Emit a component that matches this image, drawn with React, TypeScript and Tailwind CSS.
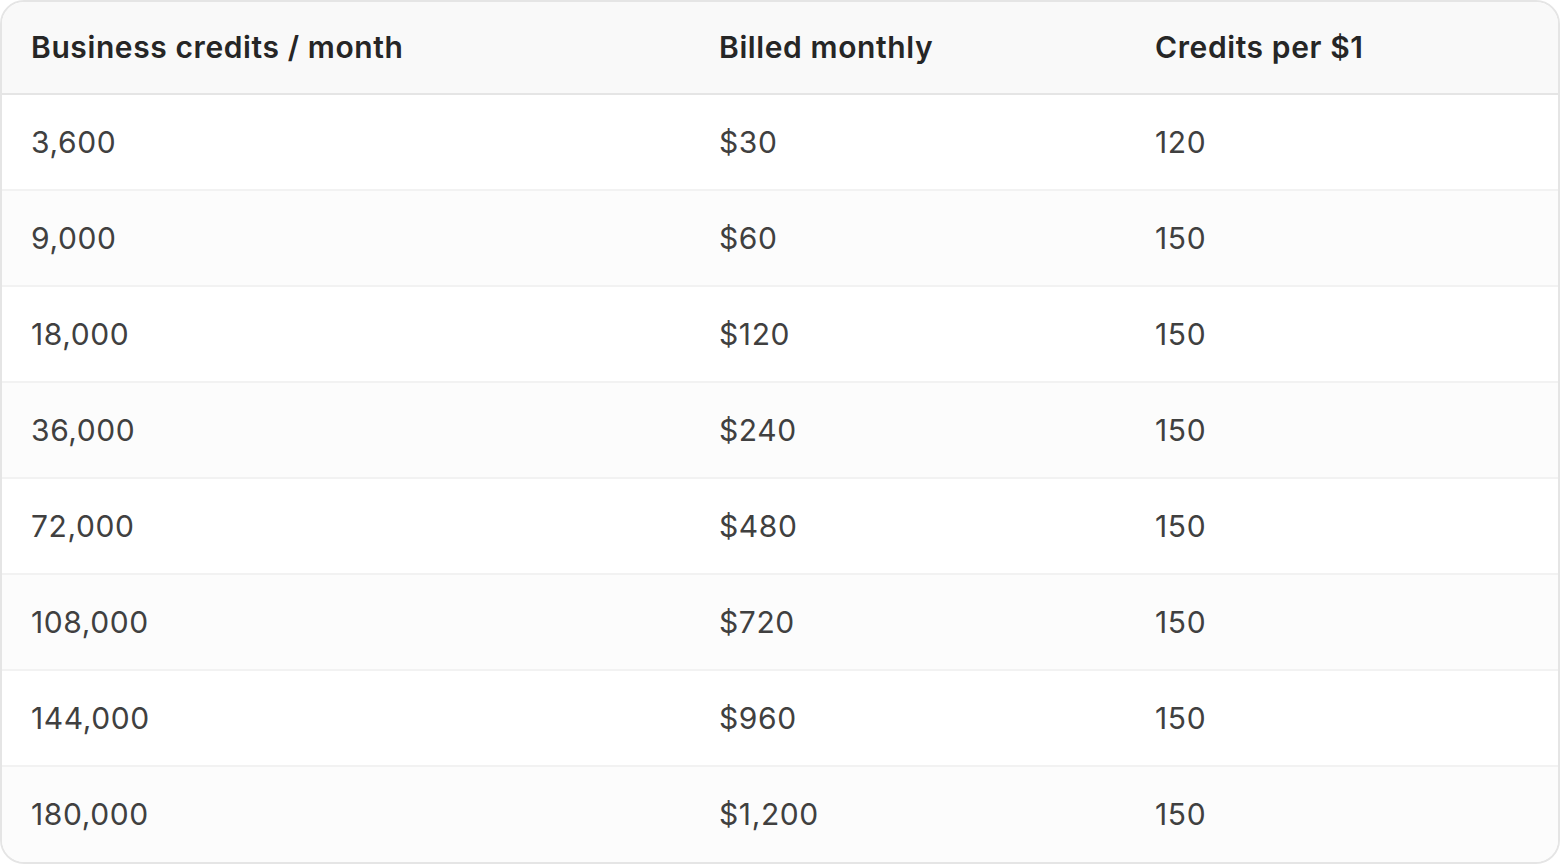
import React from 'react';

const rows: [string, string, string][] = [
  ['3,600', '$30', '120'],
  ['9,000', '$60', '150'],
  ['18,000', '$120', '150'],
  ['36,000', '$240', '150'],
  ['72,000', '$480', '150'],
  ['108,000', '$720', '150'],
  ['144,000', '$960', '150'],
  ['180,000', '$1,200', '150'],
];

export default function App() {
  return (
    <div className="w-[1560px] h-[864px] bg-white font-['Inter',sans-serif]">
      <div className="h-full overflow-hidden rounded-[24px] border-2 border-[#e5e5e5]">
        <table className="w-full border-collapse table-fixed">
          <colgroup>
            <col className="w-[688px]" />
            <col className="w-[436px]" />
            <col />
          </colgroup>
          <thead>
            <tr className="h-[92px] bg-[#f9f9f9] border-b-2 border-[#e5e5e5]">
              <th className="pl-[29px] text-left text-[30px] font-semibold tracking-[0.02em] text-[#262626]">Business credits / month</th>
              <th className="pl-[29px] text-left text-[30px] font-semibold tracking-[0.02em] text-[#262626]">Billed monthly</th>
              <th className="pl-[29px] text-left text-[30px] font-semibold tracking-[0.02em] text-[#262626]">Credits per $1</th>
            </tr>
          </thead>
          <tbody>
            {rows.map((r, i) => (
              <tr
                key={r[0]}
                className={`h-[96px] ${i < rows.length - 1 ? 'border-b-2 border-[#f2f2f2]' : ''} ${i % 2 === 1 ? 'bg-[#fcfcfc]' : 'bg-white'}`}
              >
                {r.map((c, j) => (
                  <td key={j} className="pl-[29px] text-[30px] tracking-[0.02em] text-[#404040]">{c}</td>
                ))}
              </tr>
            ))}
          </tbody>
        </table>
      </div>
    </div>
  );
}
